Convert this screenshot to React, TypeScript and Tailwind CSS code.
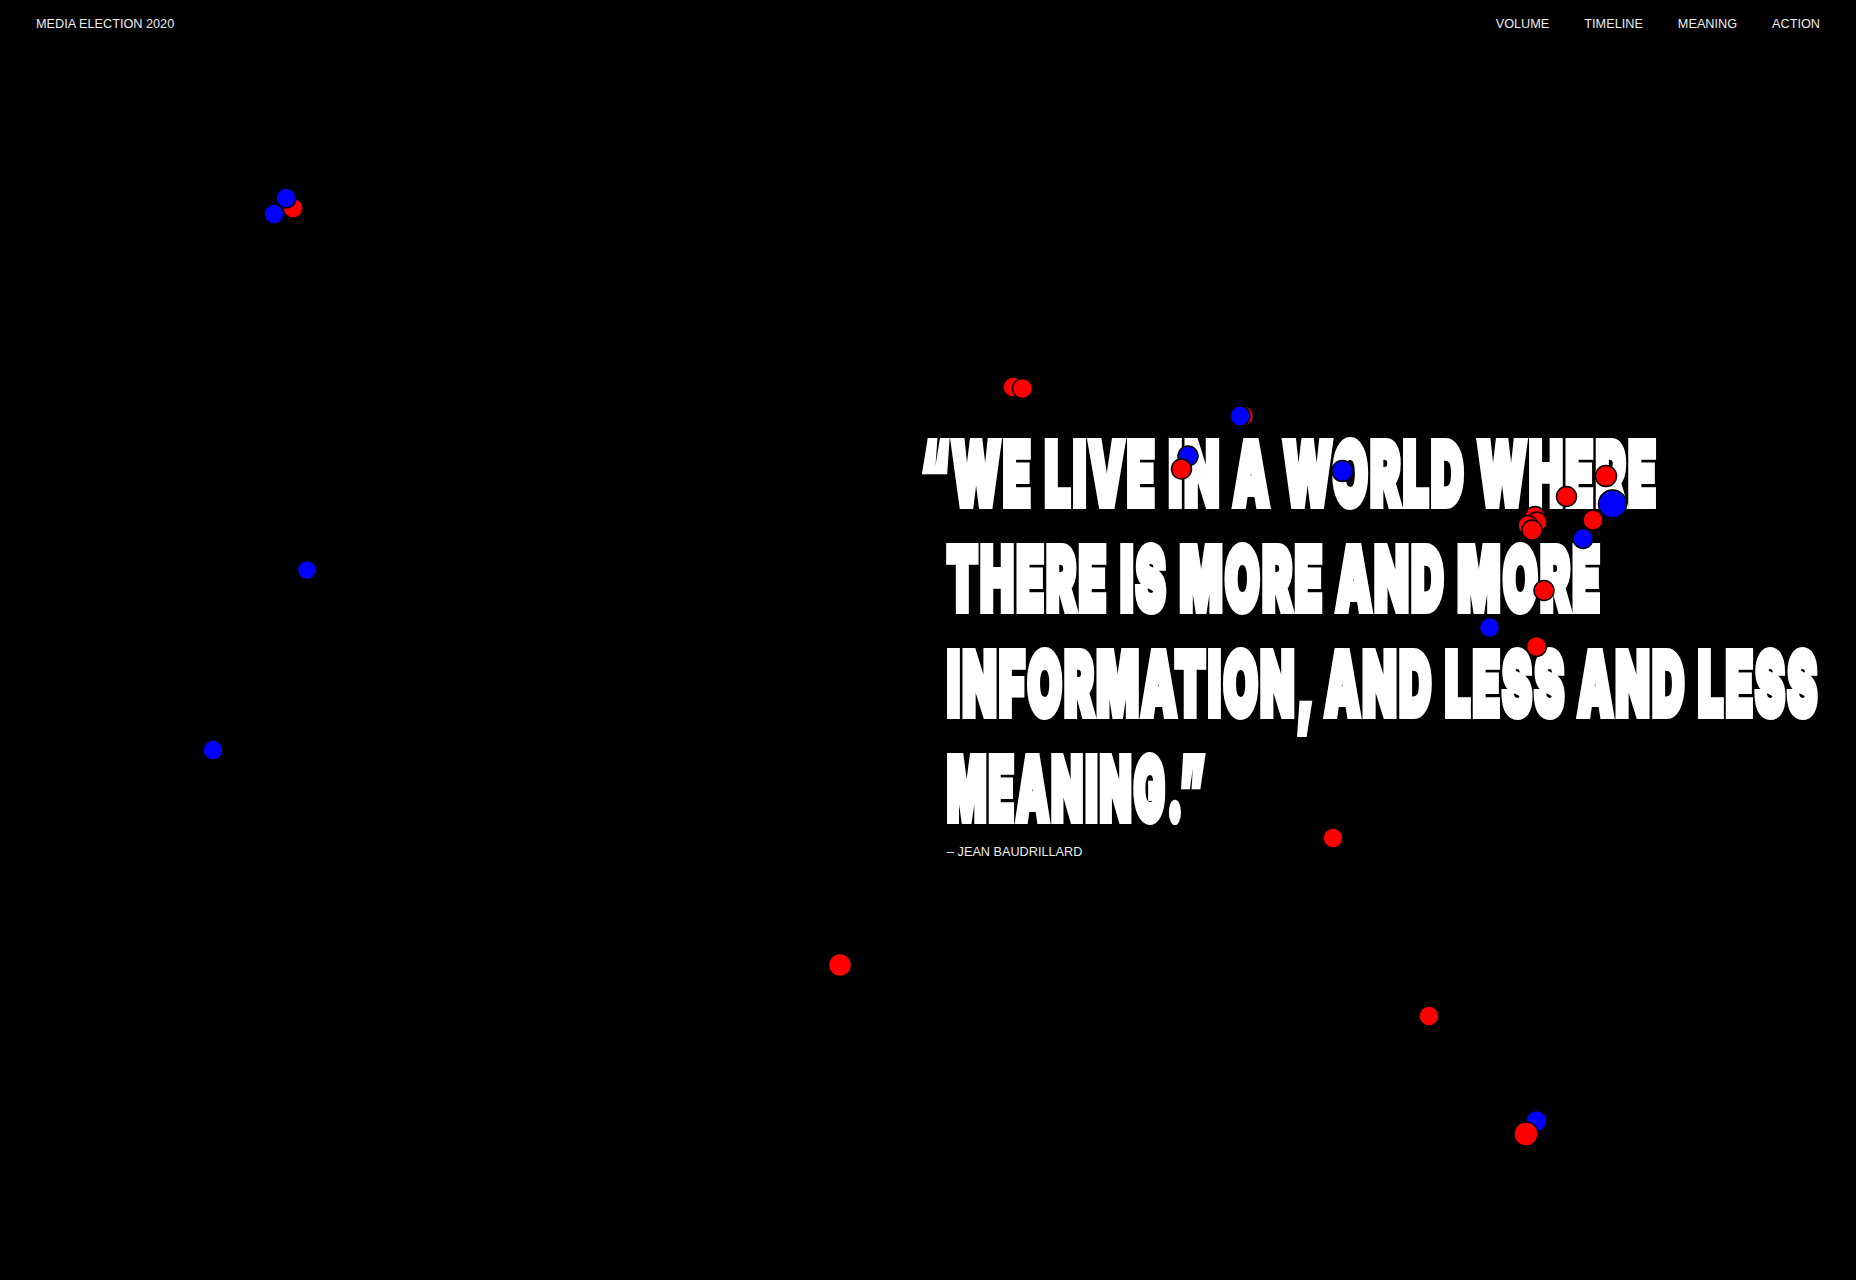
import React from "react";

type Dot = { x: number; y: number; r: number; c: "r" | "b" };

const dots: Dot[] = [
  { x: 293, y: 208, r: 10, c: "r" },
  { x: 286, y: 198, r: 10, c: "b" },
  { x: 274, y: 214, r: 10, c: "b" },
  { x: 307, y: 570, r: 9.5, c: "b" },
  { x: 213, y: 750, r: 10, c: "b" },
  { x: 840, y: 965, r: 11.5, c: "r" },
  { x: 1013, y: 387, r: 10, c: "r" },
  { x: 1022.5, y: 388.5, r: 10, c: "r" },
  { x: 1243.5, y: 416, r: 10, c: "r" },
  { x: 1240, y: 416, r: 10, c: "b" },
  { x: 1188, y: 456, r: 10, c: "b" },
  { x: 1181.5, y: 469, r: 10, c: "r" },
  { x: 1342.5, y: 471, r: 10.5, c: "b" },
  { x: 1606, y: 476, r: 10.5, c: "r" },
  { x: 1566.5, y: 496.5, r: 10, c: "r" },
  { x: 1612.5, y: 504, r: 14, c: "b" },
  { x: 1593, y: 520, r: 10, c: "r" },
  { x: 1535, y: 516.5, r: 10, c: "r" },
  { x: 1537, y: 522, r: 10, c: "r" },
  { x: 1528, y: 525.5, r: 10, c: "r" },
  { x: 1532, y: 530, r: 10, c: "r" },
  { x: 1583, y: 538.5, r: 10, c: "b" },
  { x: 1544, y: 590.5, r: 10, c: "r" },
  { x: 1489.5, y: 627.5, r: 10, c: "b" },
  { x: 1536.5, y: 646.5, r: 10, c: "r" },
  { x: 1333, y: 838, r: 10, c: "r" },
  { x: 1429, y: 1016, r: 10, c: "r" },
  { x: 1536.5, y: 1121, r: 10.5, c: "b" },
  { x: 1526, y: 1134, r: 12, c: "r" },
];

export default function App() {
  return (
    <div className="relative w-full h-[1280px] overflow-hidden bg-black text-white font-['Liberation_Sans',Arial,sans-serif]">
      <header className="flex justify-between px-[36px] pt-4 text-[12.7px] leading-4 text-[#ececec]">
        <div>MEDIA ELECTION 2020</div>
        <nav className="flex gap-[35px]">
          <span>VOLUME</span>
          <span>TIMELINE</span>
          <span>MEANING</span>
          <span>ACTION</span>
        </nav>
      </header>

      <main className="pl-[947px] mt-[389px]">
        <blockquote className="font-['Inter','Roboto',sans-serif] font-black text-[87px] leading-[105px] tracking-[5px] text-white [-webkit-text-stroke:8px_white] whitespace-nowrap">
          <div className="origin-left scale-x-[0.518] -ml-[26px]">“WE LIVE IN A WORLD WHERE</div>
          <div className="origin-left scale-x-[0.514]">THERE IS MORE AND MORE</div>
          <div className="origin-left scale-x-[0.509]">INFORMATION, AND LESS AND LESS</div>
          <div className="origin-left scale-x-[0.473]">MEANING.”</div>
        </blockquote>
        <p className="mt-[3px] text-[12.7px] leading-4 text-[#ececec]">– JEAN BAUDRILLARD</p>
      </main>

      <svg
        className="absolute inset-0 pointer-events-none"
        width="1856"
        height="1280"
        viewBox="0 0 1856 1280"
      >
        {dots.map((d, i) => (
          <circle
            key={i}
            cx={d.x}
            cy={d.y}
            r={d.r}
            fill={d.c === "r" ? "#ff0000" : "#0000ff"}
            stroke="#000"
            strokeWidth={1.5}
          />
        ))}
      </svg>
    </div>
  );
}
